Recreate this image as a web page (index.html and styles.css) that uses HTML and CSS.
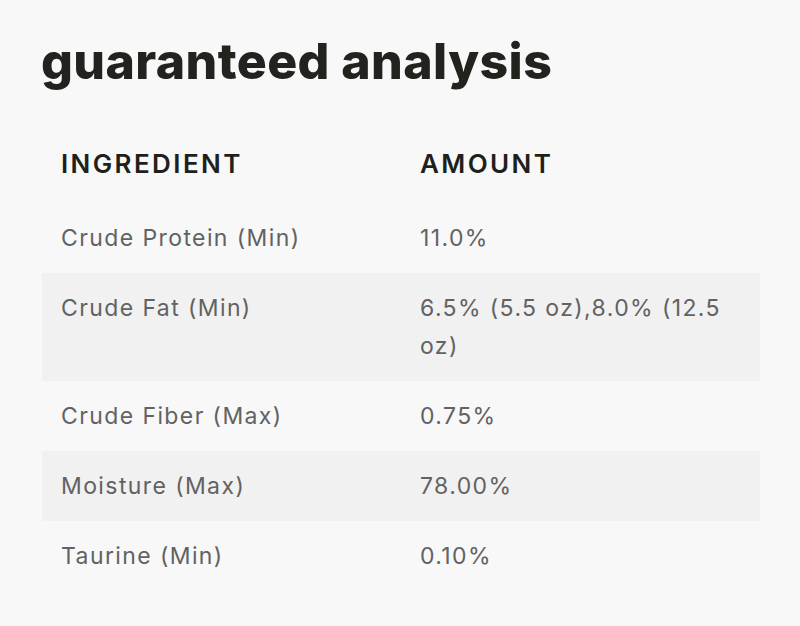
FILE: index.html
```html
<!DOCTYPE html>
<html>
<head>
<meta charset="utf-8">
<link rel="stylesheet" href="styles.css">
</head>
<body>
<section class="analysis">
  <h2 class="title">guaranteed analysis</h2>
  <table class="ga-table">
    <thead>
      <tr><th>Ingredient</th><th>Amount</th></tr>
    </thead>
    <tbody>
      <tr><td>Crude Protein (Min)</td><td>11.0%</td></tr>
      <tr class="alt"><td>Crude Fat (Min)</td><td>6.5% (5.5 oz),8.0% (12.5 oz)</td></tr>
      <tr><td>Crude Fiber (Max)</td><td>0.75%</td></tr>
      <tr class="alt"><td>Moisture (Max)</td><td>78.00%</td></tr>
      <tr><td>Taurine (Min)</td><td>0.10%</td></tr>
    </tbody>
  </table>
</section>
</body>
</html>
```
FILE: styles.css
```css
html, body {
  margin: 0;
  padding: 0;
  background: #f8f8f8;
}
body {
  font-family: "Inter", "Open Sans", sans-serif;
}
.analysis {
  padding: 31px 40px 0 42px;
}
.title {
  margin: 0 0 0 -1px;
  font-family: "Inter", sans-serif;
  font-weight: 800;
  font-size: 50px;
  line-height: 60px;
  letter-spacing: 0.4px;
  color: #22221e;
}
.ga-table {
  margin-top: 42px;
  width: 718px;
  border-collapse: collapse;
  table-layout: fixed;
}
.ga-table th,
.ga-table td {
  text-align: left;
  vertical-align: top;
  padding: 16px 19px;
  line-height: 38px;
}
.ga-table th {
  padding: 12px 19px 20px;
  font-size: 26px;
  font-weight: 600;
  text-transform: uppercase;
  color: #1f1f1c;
  letter-spacing: 2.4px;
}
.ga-table td {
  font-size: 23px;
  color: #626262;
  letter-spacing: 1.4px;
}
.ga-table tr.alt td {
  background: #f1f1f1;
}
```
